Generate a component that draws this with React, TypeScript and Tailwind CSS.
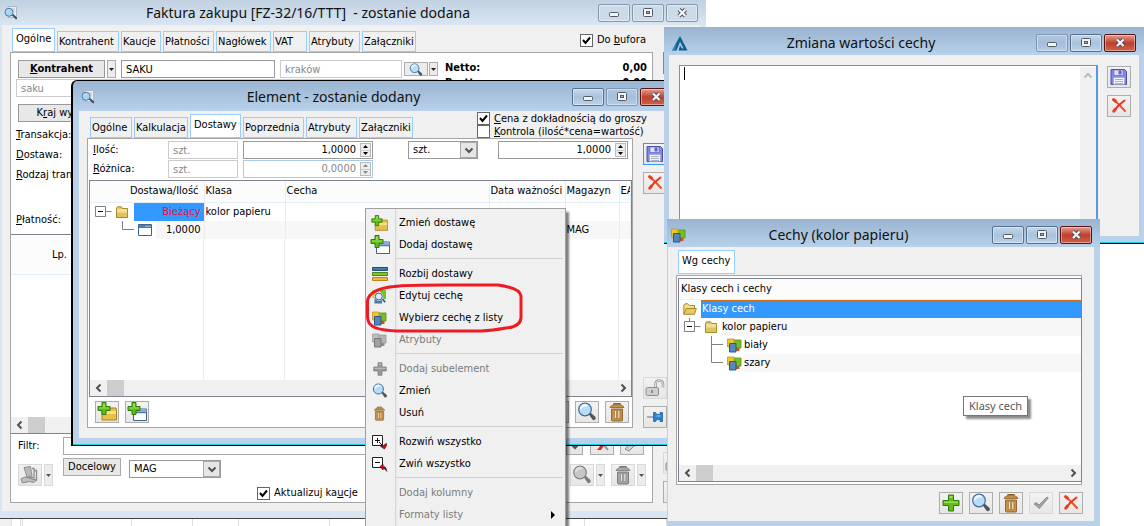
import React, { useState } from "react";
import type { ReactNode } from "react";

/* ---------- icons ---------- */

type IconProps = { gray?: boolean; className?: string };

function Magnifier({ gray, className = "h-5 w-5" }: IconProps) {
  return (
    <svg viewBox="0 0 20 20" className={className} aria-hidden="true">
      <path d="M11.5 12l2-1.5 5 4.500q1 2-1.200 3.200l-1.500-.2z" fill={gray ? "#7d7d7d" : "#4d5560"} />
      <circle cx="8" cy="7.500" r="6.300" fill={gray ? "#c6c6c6" : "#b9ddf7"} stroke={gray ? "#848484" : "#3c6a9c"} strokeWidth="1.200" />
      <path d="M3.500 8A4.500 4.500 0 0 1 11.500 4Q6 4 3.500 8z" fill={gray ? "#dedede" : "#edf8ff"} />
    </svg>
  );
}

function PageMagnifier() {
  return (
    <svg viewBox="0 0 15 15" className="h-[15px] w-[15px]" aria-hidden="true">
      <path d="M4 .5h8.500v11H4z" fill="#e9ecef" stroke="#b5b9bf" />
      <path d="M6 3h5M6 5h5" stroke="#b8c0cb" />
      <path d="M7.500 9l1.500-1.200 4 3.700q.5 1.500-1 2z" fill="#3f4d5c" />
      <circle cx="5" cy="6.300" r="4" fill="#a9d5f3" stroke="#467fb5" />
      <path d="M2.500 6q1-2.500 3.500-2.400Q3.600 4.200 2.500 6z" fill="#f2faff" />
    </svg>
  );
}

function Trash({ gray, className = "h-5 w-5" }: IconProps) {
  const line = gray ? "#777777" : "#8d5f28";
  return (
    <svg viewBox="0 0 20 20" className={className} aria-hidden="true">
      <path d="M7 3V1.500h6V3" fill="none" stroke={line} strokeWidth="1.200" />
      <path d="M3 5.500q1-3 7-3t7 3z" fill={gray ? "#ababab" : "#c39247"} stroke={line} strokeWidth=".8" />
      <path d="M4.500 7h11v11q0 1-1 1h-9q-1 0-1-1z" fill={gray ? "#a4a4a4" : "#c58f45"} stroke={line} strokeWidth=".9" />
      <path d="M7.500 8.500h2v8h-2zM10.800 8.500h2v8h-2z" fill={gray ? "#e3e3e3" : "#f6e6c4"} stroke={line} strokeWidth=".5" />
    </svg>
  );
}

function Floppy() {
  return (
    <svg viewBox="0 0 18 18" className="h-[18px] w-[18px]" aria-hidden="true">
      <path d="M1 1.500h13.500l2 2v13H1z" fill="#8389e4" stroke="#4b50a8" />
      <path d="M4 2h9v5.500H4z" fill="#dfe1fb" stroke="#5a5fb5" strokeWidth=".6" />
      <path d="M8.500 2.500h3v4h-3z" fill="#5d62c4" />
      <path d="M3.500 9.500h11v7h-11z" fill="#f3f5f8" stroke="#9197c6" strokeWidth=".5" />
      <path d="M5 11.500h8M5 13.500h8M5 15.500h8" stroke="#a8b0c0" />
    </svg>
  );
}

function RedX() {
  return (
    <svg viewBox="0 0 16 16" className="h-4 w-4" aria-hidden="true">
      <path d="M3 2q5 4 11 11" fill="none" stroke="#f2512b" strokeWidth="2" strokeLinecap="round" />
      <path d="M13.500 2.500Q7 7 3 13" fill="none" stroke="#ea3219" strokeWidth="2" strokeLinecap="round" />
      <path d="M2.600 1.700l2 1.500M2.800 13.200l1.500-2" fill="none" stroke="#f03b20" strokeWidth="3" strokeLinecap="round" />
    </svg>
  );
}

function Plus({ gray, className = "h-[18px] w-[18px]" }: IconProps) {
  return (
    <svg viewBox="0 0 18 18" className={className} aria-hidden="true">
      <path d="M6.500 1h5v5.500H17v5h-5.500V17h-5v-5.500H1v-5h5.500z" fill={gray ? "#9a9a9a" : "#5fbc1c"} stroke={gray ? "#777" : "#33780c"} />
      <path d="M7.500 2h3v2h-3zM2 7.500h14v1.500H2z" fill={gray ? "#b9b9b9" : "#97e24c"} />
    </svg>
  );
}

function FolderPlus({ className = "h-5 w-5" }: IconProps) {
  return (
    <svg viewBox="0 0 20 20" className={className} aria-hidden="true">
      <path d="M11.500 7.500l1-1.500H19l.5 1.500v10.500H5V9z" fill="#e5c04b" stroke="#a68524" />
      <path d="M5.500 12h13.500v-3H8z" fill="#f5df8d" />
      <path d="M5 .5h4V4.500h4v4H9v4H5v-4H1v-4h4z" fill="#60bd1d" stroke="#327a0b" />
      <path d="M6 1.500h2V5H6zM2 5.500h10v1H2z" fill="#95e148" />
    </svg>
  );
}

function WindowPlus({ className = "h-5 w-5" }: IconProps) {
  return (
    <svg viewBox="0 0 20 20" className={className} aria-hidden="true">
      <path d="M6.500 7h13v11.500h-13z" fill="#fafcff" stroke="#42648c" />
      <path d="M7 7.500h12.500v3H7z" fill="#84aede" />
      <path d="M7 10.700h12.500" stroke="#42648c" />
      <path d="M5 .5h4V4.500h4v4H9v4H5v-4H1v-4h4z" fill="#60bd1d" stroke="#327a0b" />
      <path d="M6 1.500h2V5H6zM2 5.500h10v1H2z" fill="#95e148" />
    </svg>
  );
}

function Bars() {
  return (
    <svg viewBox="0 0 16 16" className="h-4 w-4" aria-hidden="true">
      <path d="M.5 1.500h15v3H.5z" fill="#4679ae" stroke="#274e78" />
      <path d="M.5 6.500h15v3H.5z" fill="#83c52c" stroke="#4a8417" />
      <path d="M.5 11.500h15v3H.5z" fill="#f2b83e" stroke="#bd8417" />
    </svg>
  );
}

function Cubes({ gray, className = "h-[15px] w-[15px]" }: IconProps) {
  return (
    <svg viewBox="0 0 15 15" className={className} aria-hidden="true">
      <path d="M8.500 9h4v4h-4z" fill={gray ? "#8c8c8c" : "#e0481c"} />
      <path d="M6.500 2h7.500v8H6.500z" fill={gray ? "#b4b4b4" : "#78be20"} stroke={gray ? "#999" : "#559312"} strokeWidth=".8" />
      <path d="M.5 1H7v8H.5z" fill={gray ? "#bebebe" : "#f0c62c"} stroke={gray ? "#9d9d9d" : "#c89216"} strokeWidth=".8" />
      <path d="M2.500 5.500H9v8.500H2.500z" fill={gray ? "#a2a2a2" : "#5487bb"} stroke={gray ? "#777" : "#2c5688"} />
    </svg>
  );
}

function CubesMagnifier() {
  return (
    <svg viewBox="0 0 15 15" className="h-[15px] w-[15px]" aria-hidden="true">
      <path d="M8 1h6v9H8z" fill="#79bf22" />
      <path d="M.5 1h7v8h-7z" fill="#f0c22b" />
      <path d="M2.500 8H10v6.500H2.500z" fill="#4679ad" />
      <path d="M9 10l1.500-1.500 3.500 3.800-1.500 2z" fill="#2b5f9c" stroke="#eef3fa" strokeWidth=".6" />
      <circle cx="6.800" cy="7.500" r="4.400" fill="#fff" />
      <circle cx="6.800" cy="7.500" r="3.500" fill="#dceefb" stroke="#375c8c" strokeWidth="1" />
    </svg>
  );
}

function TreeToggleIcon({ sign }: { sign: "plus" | "minus" }) {
  return (
    <svg viewBox="0 0 16 16" className="h-4 w-4" aria-hidden="true">
      <path d="M.5 1.500h10v10H.5z" fill="#fff" stroke="#222" />
      <path d={sign === "plus" ? "M3 6.500h5M5.500 4v5" : "M3 6.500h5"} stroke="#111" />
      {sign === "plus" ? (
        <g>
          <path d="M7 8l4 4" stroke="#111" />
          <path d="M14.500 9.500v2l-2 3.500-4-2.500h2l2-2z" fill="#e00" stroke="#111" strokeWidth=".6" />
        </g>
      ) : (
        <g>
          <path d="M12 12l3 3.500" stroke="#111" />
          <path d="M8 10.500L11 8v2q3 .5 3.500 4-2-2-3.500-1.500v1.500z" fill="#e00" stroke="#111" strokeWidth=".6" />
        </g>
      )}
    </svg>
  );
}

function Folder() {
  return (
    <svg viewBox="0 0 14 12" className="h-3 w-[14px] shrink-0" aria-hidden="true">
      <path d="M1.500 2.500L2.500.8h4l1 1.700h5v9h-11z" fill="#e0c55c" stroke="#a88a2c" />
      <path d="M2 3h10v3.500H2z" fill="#f1df96" />
    </svg>
  );
}

function OpenFolder() {
  return (
    <svg viewBox="0 0 14 12" className="h-3 w-[14px] shrink-0" aria-hidden="true">
      <path d="M.8 11V2L2 .8h3L6.500 2.500h5v3" fill="#f3e096" stroke="#a88a2c" />
      <path d="M.8 11.300L3.300 5.500h10L11.500 11.300z" fill="#e7c95d" stroke="#a88a2c" />
    </svg>
  );
}

function MiniWindow() {
  return (
    <svg viewBox="0 0 14 12" className="h-3 w-[14px] shrink-0" aria-hidden="true">
      <path d="M.5.5h13v11H.5z" fill="#fbfdff" stroke="#3c648f" />
      <path d="M1 1h12v3H1z" fill="#4d7fb4" />
      <path d="M7.500 2.200h1M9.500 2.200h1M11.500 2.200h1" stroke="#fff" />
    </svg>
  );
}

function Padlock() {
  return (
    <svg viewBox="0 0 20 18" className="h-[18px] w-5" aria-hidden="true">
      <path d="M10.500 9V5q0-3.500 3.700-3.500T18 5v3.500" fill="none" stroke="#9e9e9e" strokeWidth="2.600" />
      <path d="M10.500 9V5q0-3.500 3.700-3.500T18 5v3.500" fill="none" stroke="#e4e4e4" strokeWidth="1" />
      <rect x="1" y="8.500" width="12.500" height="8" rx="1.500" fill="#cfcfcf" stroke="#8e8e8e" />
      <path d="M7 11v3" stroke="#777" strokeWidth="1.500" />
    </svg>
  );
}

function Pin() {
  return (
    <svg viewBox="0 0 16 14" className="h-[14px] w-4" aria-hidden="true">
      <path d="M0 7h7" stroke="#8e979f" strokeWidth="1.500" />
      <path d="M6.500 2.500h2l1.500 2h3V2.500h2.500v9H13v-2h-3l-1.500 2h-2z" fill="#2d80cf" stroke="#16579b" strokeWidth=".7" />
      <path d="M9.500 5.500h4v1h-4z" fill="#9cccf5" />
    </svg>
  );
}

function Logo() {
  return (
    <svg viewBox="0 0 16 15" className="h-[15px] w-4" aria-hidden="true">
      <path d="M8 0l7.500 14.500h-9L8 9.500l2 3h1.500L8 5.500 4.500 14.500H0z" fill="#0a5f93" />
      <path d="M7.500 1L4.500 7.300 3 14.500H.3z" fill="#2d8dbb" />
    </svg>
  );
}

function GrayCheck() {
  return (
    <svg viewBox="0 0 16 14" className="h-[14px] w-4" aria-hidden="true">
      <path d="M1 8l2-1.500 3 2.500 8-8 1.300 1L6.500 12.500z" fill="#a3a3a3" stroke="#777" strokeWidth=".7" />
    </svg>
  );
}

function GrayDocs() {
  return (
    <svg viewBox="0 0 20 18" className="h-[18px] w-5" aria-hidden="true">
      <path d="M4 1.500l6.500-1 1.500 9.500-5 1z" fill="#b9b9b9" stroke="#8f8f8f" />
      <path d="M12 2.500h2v9H9M14.500 4.500h2v9h-5" fill="none" stroke="#8d8d8d" strokeWidth="1.300" />
      <path d="M1 13q3-3 7-1.500l5 2 4 .5-3.500 2.500-4-1-7 1.500z" fill="#bdbdbd" stroke="#8a8a8a" />
    </svg>
  );
}

function RedBrush() {
  return (
    <svg viewBox="0 0 18 16" className="h-4 w-[18px]" aria-hidden="true">
      <path d="M4 14L12 4l2 1-6 9z" fill="#df2323" />
      <path d="M10 8l5 6" stroke="#999" strokeWidth="2" />
    </svg>
  );
}

function GrayWrench() {
  return (
    <svg viewBox="0 0 18 16" className="h-4 w-[18px]" aria-hidden="true">
      <path d="M2 13q3-4 6-4.500Q6 4 12 2L10.500 5l2.500 2 3-2q0 5-5 5L6 15z" fill="#cfcfcf" stroke="#8a8a8a" />
    </svg>
  );
}

function Chevron({ dir }: { dir: "left" | "right" | "up" | "down" }) {
  const d = {
    left: "M6.500 1.500L3 5l3.500 3.500",
    right: "M3.500 1.500L7 5l-3.500 3.500",
    up: "M1.500 6.500L5 3l3.500 3.500",
    down: "M1.500 3.500L5 7l3.500-3.500",
  }[dir];
  return (
    <svg viewBox="0 0 10 10" className="h-[10px] w-[10px]" aria-hidden="true">
      <path d={d} fill="none" stroke="currentColor" strokeWidth="2" />
    </svg>
  );
}

/* ---------- shared controls ---------- */

function CaptionButton({ kind, tone }: { kind: "min" | "max" | "close"; tone: "dim" | "blue" | "soft" | "red" }) {
  const look = {
    dim: "border-[#8697b0] bg-[#cddbe9]",
    soft: "border-[#7f97b5] bg-linear-to-b from-[#b0c6de] via-[#a5bfdb] via-50% to-[#b3cce6]",
    blue: "border-[#56708f] bg-linear-to-b from-[#c6d8ea] via-[#a9c2dc] via-50% to-[#bbd3ea]",
    red: "border-[#561616] bg-linear-to-b from-[#e69c91] via-[#bf3f2a] via-50% to-[#d0614a]",
  }[tone];
  const label = { min: "Minimalizuj", max: "Maksymalizuj", close: "Zamknij" }[kind];
  return (
    <button type="button" aria-label={label} className={`grid h-[18px] w-8 place-items-center rounded-[2px] border shadow-[inset_0_0_0_1px_rgba(255,255,255,0.4)] ${look}`}>
      <svg viewBox="0 0 14 12" className="h-3 w-[14px]" aria-hidden="true">
        {kind === "min" && <rect x="2.500" y="5.500" width="9" height="4" rx="1" fill="#f4f4f4" stroke="#525a66" />}
        {kind === "max" && (
          <g fill="#f4f4f4" stroke="#525a66">
            <rect x="2.500" y="1.500" width="9" height="8" rx="1" />
            <rect x="5.500" y="4.500" width="3" height="2" fill="#9fb5cc" />
          </g>
        )}
        {kind === "close" && (
          <g>
            <path d="M4 2.500l6.500 6.500M10.500 2.500L4 9" stroke="#4d5360" strokeWidth="4.200" />
            <path d="M4 2.500l6.500 6.500M10.500 2.500L4 9" stroke="#f6f6f6" strokeWidth="2.200" />
          </g>
        )}
      </svg>
    </button>
  );
}

type TitleBarProps = { icon: ReactNode; title: string; dim?: boolean; dimMax?: boolean; dimMin?: boolean };

function TitleBar({ icon, title, dim, dimMax, dimMin }: TitleBarProps) {
  return (
    <header className="flex h-7 shrink-0 items-center gap-1 pr-2 pl-1">
      <span className="w-6">{icon}</span>
      <h1 className="min-w-0 flex-1 truncate pr-[10px] text-center font-['Noto_Sans',sans-serif] text-[14px] leading-6 whitespace-pre text-[#111]">{title}</h1>
      <div className="flex gap-[2px]">
        <CaptionButton kind="min" tone={dim ? "dim" : dimMin ? "soft" : "blue"} />
        <CaptionButton kind="max" tone={dim ? "dim" : dimMax ? "soft" : "blue"} />
        <CaptionButton kind="close" tone={dim ? "dim" : "red"} />
      </div>
    </header>
  );
}

function Tab({ active, width, children }: { active?: boolean; width: string; children: ReactNode }) {
  return (
    <button
      type="button"
      role="tab"
      aria-selected={!!active}
      className={`border border-[#99ccff] text-left whitespace-nowrap ${width} ${active ? "h-6 bg-white pb-[3px] pl-[3px]" : "h-[21px] bg-[#f0f0f0] pl-px"}`}
    >
      {children}
    </button>
  );
}

function ToolButton({ label, children, state = "normal" }: { label: string; children: ReactNode; state?: "normal" | "off" | "focus" }) {
  const look = { normal: "border-[#adadad]", off: "border-[#d9d9d9]", focus: "border-[#3399ff]" }[state];
  return (
    <button type="button" aria-label={label} disabled={state === "off"} className={`grid h-[22px] w-6 shrink-0 place-items-center border bg-linear-to-b from-[#f2f2f2] to-[#e6e6e6] ${look}`}>
      {children}
    </button>
  );
}

function ArrowButton({ label, off, height = "h-[22px]" }: { label: string; off?: boolean; height?: string }) {
  return (
    <button type="button" aria-label={label} className={`grid w-[9px] shrink-0 place-items-center border bg-[#ececec] ${height} ${off ? "border-[#d9d9d9] text-[#555]" : "border-[#adadad] text-[#222]"}`}>
      <svg viewBox="0 0 5 3" className="h-[3px] w-[5px]" aria-hidden="true"><path d="M0 0h5L2.500 3z" fill="currentColor" /></svg>
    </button>
  );
}

function TextField({ label, value, look }: { label: string; value: string; look: string }) {
  return <input aria-label={label} defaultValue={value} className={`h-[18px] min-w-0 border bg-white px-1 outline-none ${look}`} />;
}

function SpinField({ id, value, width, off }: { id: string; value: string; width: string; off?: boolean }) {
  return (
    <span className={`flex h-[18px] border bg-white p-px ${width} ${off ? "border-[#a9c8ea] text-[#888]" : "border-[#999]"}`}>
      <input id={id} aria-label={id} defaultValue={value} className="min-w-0 flex-1 bg-transparent pr-1 text-right outline-none" />
      <span className={`flex w-[11px] flex-col justify-between border border-[#bbb] bg-[#eee] ${off ? "text-[#888]" : "text-black"}`}>
        <button type="button" aria-label="Więcej" className="grid flex-1 place-items-center">
          <svg viewBox="0 0 5 3" className="h-[3px] w-[5px]" aria-hidden="true"><path d="M0 3h5L2.500 0z" fill="currentColor" /></svg>
        </button>
        <button type="button" aria-label="Mniej" className="grid flex-1 place-items-center border-t border-[#ccc]">
          <svg viewBox="0 0 5 3" className="h-[3px] w-[5px]" aria-hidden="true"><path d="M0 0h5L2.500 3z" fill="currentColor" /></svg>
        </button>
      </span>
    </span>
  );
}

function Combo({ label, value, width }: { label: string; value: string; width: string }) {
  return (
    <span className={`grid h-[18px] grid-cols-[1fr_17px] border border-[#999] bg-white ${width}`}>
      <select aria-label={label} className="col-span-2 col-start-1 row-start-1 appearance-none bg-transparent px-1 leading-4 outline-none">
        <option>{value}</option>
      </select>
      <span className="pointer-events-none col-start-2 row-start-1 grid place-items-center border border-[#aaa] bg-[#e6e6e6] text-[#505050]">
        <Chevron dir="down" />
      </span>
    </span>
  );
}

function CheckBox({ checked, children, tight }: { checked?: boolean; children: ReactNode; tight?: boolean }) {
  return (
    <label className={`flex items-center gap-1 whitespace-nowrap ${tight ? "h-[13px] leading-[13px]" : "h-[14px]"}`}>
      <span className="grid h-[13px] w-[13px] shrink-0">
        <input type="checkbox" defaultChecked={checked} className="peer col-start-1 row-start-1 h-[13px] w-[13px] appearance-none border border-[#666] bg-white" />
        <svg viewBox="0 0 13 13" className="pointer-events-none invisible col-start-1 row-start-1 peer-checked:visible" aria-hidden="true">
          <path d="M3 6l2.500 3L10 3.500" fill="none" stroke="#000" strokeWidth="2" />
        </svg>
      </span>
      <span>{children}</span>
    </label>
  );
}

function ScrollBar() {
  return (
    <div className="flex h-4 shrink-0 items-center bg-[#f0f0f0] text-[#505050]">
      <button type="button" aria-label="Przewiń w lewo" className="grid h-full w-[17px] place-items-center"><Chevron dir="left" /></button>
      <span className="h-full w-[17px] bg-[#cdcdcd]" />
      <button type="button" aria-label="Przewiń w prawo" className="ml-auto grid h-full w-[17px] place-items-center"><Chevron dir="right" /></button>
    </div>
  );
}

/* ---------- windows ---------- */

function InvoiceWindow() {
  return (
    <section className="absolute top-0 left-0 flex h-[519px] w-[706px] flex-col border-b border-[#444] bg-[#d9e5f2] bg-linear-to-b from-[#c1d1e1] to-[#d9e5f2] to-[25px]">
      <div className="-mt-px h-[26px]">
        <TitleBar icon={<PageMagnifier />} title="Faktura zakupu [FZ-32/16/TTT]  - zostanie dodana" dim />
      </div>
      <div className="mr-[6px] mb-[7px] ml-[2px] flex min-h-0 flex-1 flex-col bg-[#f0f0f0] pb-2 pl-2">
        <div className="flex h-[27px] shrink-0 items-end pl-[2px]">
          <div role="tablist" className="flex items-end gap-[2px]">
            <Tab active width="w-[43px]">Ogólne</Tab>
            <Tab width="w-[62px]">Kontrahent</Tab>
            <Tab width="w-10">Kaucje</Tab>
            <Tab width="w-[51px]">Płatności</Tab>
            <Tab width="w-[55px]">Nagłówek</Tab>
            <Tab width="w-[34px]">VAT</Tab>
            <Tab width="w-[51px]">Atrybuty</Tab>
            <Tab width="w-[54px]">Załączniki</Tab>
          </div>
          <div className="mr-[54px] ml-auto pb-[5px]"><CheckBox checked>Do <u>b</u>ufora</CheckBox></div>
        </div>
        <div className="flex min-h-0 flex-1 gap-[10px]">
          <div className="flex w-[643px] flex-col border border-[#a5a5a5] bg-white">
            <div className="h-[181px] shrink-0 pt-[7px] pr-[5px] pl-[5px]">
              <div className="flex items-start">
                <div className="flex w-[422px] shrink-0 flex-col gap-px">
                  <div className="flex h-[18px] items-center pl-[2px]">
                    <button type="button" className="h-[18px] w-[87px] border border-[#999] bg-[#e8e8e8] font-bold"><u>K</u>ontrahent</button>
                    <span className="ml-[2px] flex"><ArrowButton label="Wybierz kontrahenta" height="h-[18px]" /></span>
                    <span className="ml-[5px] flex w-[154px]"><TextField label="Kod" value="SAKU" look="flex-1 border-[#999]" /></span>
                    <span className="ml-[5px] flex w-[122px]"><TextField label="Miasto" value="kraków" look="flex-1 border-[#ccc] text-[#888]" /></span>
                    <span className="ml-[2px] flex items-center gap-px">
                      <button type="button" aria-label="Szukaj" className="grid h-[14px] w-6 place-items-center border border-[#adadad] bg-[#ececec]"><Magnifier className="h-[14px] w-[14px]" /></button>
                      <ArrowButton label="Opcje wyszukiwania" height="h-[14px]" />
                    </span>
                  </div>
                  <TextField label="Nazwa" value="saku" look="border-[#ccc] text-[#888]" />
                </div>
                <dl className="grid flex-1 grid-cols-[1fr_auto] pl-[7px] leading-[15px] font-bold">
                  <dt>Netto:</dt><dd>0,00</dd>
                  <dt>Brutto:</dt><dd>0,00</dd>
                </dl>
              </div>
              <button type="button" className="mt-[7px] ml-[2px] h-[18px] w-24 border border-[#999] bg-[#e8e8e8]">K<u>r</u>aj wysyłki</button>
              <div className="mt-[3px] flex flex-col leading-5">
                <span><u>T</u>ransakcja:</span>
                <span><u>D</u>ostawa:</span>
                <span><u>R</u>odzaj transakcji:</span>
              </div>
              <p className="mt-[25px] leading-5"><u>P</u>łatność:</p>
            </div>
            <div className="flex h-[200px] shrink-0 flex-col border border-l-0 border-[#7f8290]">
              <div className="h-10 border-b border-[#e4edf8] bg-[#fcfcfc] pt-[13px] pl-[41px]">Lp.</div>
              <div className="flex-1" />
              <ScrollBar />
            </div>
            <div className="flex flex-1 flex-col pt-[3px] pl-[7px]">
              <div className="flex items-center">
                <label htmlFor="filtr" className="w-[45px]">Filtr:</label>
                <input id="filtr" className="h-[18px] w-[503px] border border-[#aaa] bg-white" />
                <span className="grid h-[18px] w-[17px] place-items-center border border-[#aaa] bg-[#e6e6e6] text-[#505050]"><Chevron dir="down" /></span>
                <span className="flex h-[18px] items-end gap-[6px] overflow-hidden pl-[7px]">
                  <ToolButton label="Wyczyść filtr"><RedBrush /></ToolButton>
                  <ToolButton label="Konstruktor filtra"><GrayWrench /></ToolButton>
                </span>
              </div>
              <div className="mt-[3px] flex items-start">
                <span className="mt-[6px] flex w-[45px] gap-[2px]">
                  <ToolButton label="Dokumenty" state="off"><GrayDocs /></ToolButton>
                  <ArrowButton label="Więcej dokumentów" off />
                </span>
                <button type="button" className="h-[18px] w-[58px] border border-[#aaa] bg-[#e8e8e8]">Docelowy</button>
                <span className="mt-[2px] ml-2 flex"><Combo label="Magazyn" value="MAG" width="w-[92px]" /></span>
                <span className="mt-7 ml-9 h-0"><CheckBox checked>Aktualizuj ka<u>u</u>cje</CheckBox></span>
                <span className="mt-[6px] mr-[6px] ml-auto flex gap-[2px]">
                  <ToolButton label="Podgląd" state="off"><Magnifier gray /></ToolButton>
                  <ArrowButton label="Opcje podglądu" off />
                  <span className="w-[2px]" />
                  <ToolButton label="Usuń pozycję" state="off"><Trash gray /></ToolButton>
                  <ArrowButton label="Opcje usuwania" off />
                </span>
              </div>
            </div>
          </div>
          <div className="flex flex-col gap-[7px]">
            <ToolButton label="Zapisz fakturę" state="focus"><Floppy /></ToolButton>
            <span className="flex-1" />
            <ToolButton label="Blokada" state="off"><Padlock /></ToolButton>
            <ToolButton label="Przypnij"><Pin /></ToolButton>
          </div>
        </div>
      </div>
    </section>
  );
}

function ElementWindow() {
  return (
    <section className="absolute top-20 left-[71px] flex h-[366px] w-[611px] flex-col rounded-t-md border-2 border-t border-b border-black border-r-[#b9d1ea] bg-[#b9d1ea] bg-linear-to-b from-[#99b4d1] to-[#b9d1ea] to-[30px]">
      <div className="h-[30px] shrink-0 pt-[2px] pl-1">
        <TitleBar icon={<PageMagnifier />} title="Element - zostanie dodany" dimMax />
      </div>
      <div className="mx-[6px] mb-[6px] flex min-h-0 flex-1 flex-col bg-[#f0f0f0] pb-[10px] pl-2">
        <div className="flex h-[27px] shrink-0 items-end pl-[3px]">
          <div role="tablist" className="flex items-end gap-[2px]">
            <Tab width="w-[42px]">Ogólne</Tab>
            <Tab width="w-[54px]">Kalkulacja</Tab>
            <Tab active width="w-[51px]">Dostawy</Tab>
            <Tab width="w-[61px]">Poprzednia</Tab>
            <Tab width="w-[51px]">Atrybuty</Tab>
            <Tab width="w-[54px]">Załączniki</Tab>
          </div>
          <div className="ml-16 flex flex-col">
            <CheckBox tight checked><u>C</u>ena z dokładnością do groszy</CheckBox>
            <CheckBox tight><u>K</u>ontrola (ilość*cena=wartość)</CheckBox>
          </div>
        </div>
        <div className="flex min-h-0 flex-1 gap-[10px]">
          <div className="flex w-[546px] flex-col border border-[#a5a5a5] bg-white">
            <div className="flex flex-col gap-px py-[2px] pl-[5px]">
              <div className="flex items-center">
                <label htmlFor="Ilość" className="w-[75px] shrink-0"><u>I</u>lość:</label>
                <span className="flex w-[70px]"><TextField label="Jednostka" value="szt." look="flex-1 border-[#ccc] text-[#888]" /></span>
                <span className="ml-[5px]"><SpinField id="Ilość" value="1,0000" width="w-[130px]" /></span>
                <span className="ml-[35px]"><Combo label="Jednostka ceny" value="szt." width="w-[70px]" /></span>
                <span className="ml-5"><SpinField id="Cena" value="1,0000" width="w-[130px]" /></span>
              </div>
              <div className="flex items-center">
                <label htmlFor="Różnica" className="w-[75px] shrink-0"><u>R</u>óżnica:</label>
                <span className="flex w-[70px]"><TextField label="Jednostka różnicy" value="szt." look="flex-1 border-[#ccc] text-[#888]" /></span>
                <span className="ml-[5px]"><SpinField id="Różnica" value="0,0000" width="w-[130px]" off /></span>
              </div>
            </div>
            <div className="ml-px flex h-[217px] shrink-0 flex-col overflow-hidden border border-[#7f8290]">
              <table className="w-full table-fixed border-collapse">
                <colgroup>
                  <col className="w-[114px]" /><col className="w-[81px]" /><col className="w-[204px]" /><col className="w-[76px]" /><col className="w-[54px]" /><col />
                </colgroup>
                <thead>
                  <tr className="h-[21px] border-b border-[#e4edf8] bg-[#fcfcfc] [&>th]:overflow-hidden [&>th]:border-r [&>th]:border-[#e4edf8] [&>th]:px-px [&>th]:text-left [&>th]:font-normal [&>th]:whitespace-nowrap">
                    <th><span className="flex justify-end pr-1">Dostawa/Ilość</span></th>
                    <th>Klasa</th><th>Cecha</th><th>Data ważności</th><th>Magazyn</th><th>EAN</th>
                  </tr>
                </thead>
                <tbody className="[&_td]:h-[18px] [&_td]:border-r [&_td]:border-[#ececec] [&_td]:p-0 [&_td]:whitespace-nowrap">
                  <tr>
                    <td>
                      <div className="flex h-[18px] items-center">
                        <svg viewBox="0 0 20 18" className="ml-[5px] h-[18px] w-5 shrink-0" aria-hidden="true">
                          <path d="M.5 3.500h10v10H.5zM10.500 8.500h6" fill="none" stroke="#808080" />
                          <path d="M3 8.500h5" stroke="#000" />
                        </svg>
                        <Folder />
                        <span className="ml-[5px] flex-1 bg-[#3399ff] pr-[3px] text-right leading-[18px] text-[#f0102e]">Bieżący</span>
                      </div>
                    </td>
                    <td className="pl-px!">kolor papieru</td><td /><td /><td /><td />
                  </tr>
                  <tr>
                    <td>
                      <div className="flex h-[18px] items-center">
                        <svg viewBox="0 0 12 18" className="ml-8 h-[18px] w-3 shrink-0" aria-hidden="true">
                          <path d="M.5 0v8.500H12" fill="none" stroke="#808080" />
                        </svg>
                        <span className="ml-1 flex"><MiniWindow /></span>
                        <span className="ml-1 flex-1 bg-[#f7f7f7] pr-[3px] text-right leading-[18px]">1,0000</span>
                      </div>
                    </td>
                    <td className="bg-[#f7f7f7]" /><td className="bg-[#f7f7f7]" /><td className="bg-[#f7f7f7]" /><td className="bg-[#f7f7f7] pl-px!">MAG</td><td className="bg-[#f7f7f7]" />
                  </tr>
                </tbody>
              </table>
              <div className="grid flex-1 grid-cols-[114px_81px_204px_76px_54px_1fr] [&>span]:border-r [&>span]:border-[#ececec]">
                <span /><span /><span /><span /><span />
              </div>
              <ScrollBar />
            </div>
            <div className="flex gap-[6px] pt-1 pr-[3px] pl-[7px]">
              <ToolButton label="Dodaj dostawę z folderu"><FolderPlus /></ToolButton>
              <ToolButton label="Dodaj nową dostawę"><WindowPlus /></ToolButton>
              <span className="flex-1" />
              <ToolButton label="Dodaj"><Plus /></ToolButton>
              <ToolButton label="Zmień element"><Magnifier /></ToolButton>
              <ToolButton label="Usuń element"><Trash /></ToolButton>
            </div>
          </div>
          <div className="flex flex-col gap-[7px] pt-[5px]">
            <ToolButton label="Zapisz element" state="focus"><Floppy /></ToolButton>
            <ToolButton label="Anuluj element"><RedX /></ToolButton>
            <span className="flex-1" />
            <ToolButton label="Blokada elementu" state="off"><Padlock /></ToolButton>
            <ToolButton label="Przypnij element"><Pin /></ToolButton>
          </div>
        </div>
      </div>
      <div className="h-px bg-[#10cfe6]" />
    </section>
  );
}

function ValueWindow() {
  return (
    <section className="absolute top-[27px] left-[664px] flex h-[217px] w-[480px] flex-col border-b border-black bg-[#b9d1ea] bg-linear-to-b from-[#99b4d1] to-[#b9d1ea] to-[28px]">
      <div className="h-7 shrink-0 pt-[2px] pl-1">
        <TitleBar icon={<Logo />} title="Zmiana wartości cechy" dimMin />
      </div>
      <div className="mx-[5px] mb-[6px] flex min-h-0 flex-1 gap-[9px] bg-[#f0f0f0] pt-[10px] pr-2 pl-[10px]">
        <div className="flex flex-1 border border-r-2 border-b-0 border-[#5599dd] bg-white">
          <textarea aria-label="Wartość cechy" className="flex-1 resize-none border-0 bg-transparent px-1 py-[2px] outline-none" />
          <span className="absolute top-10 left-[20px] h-[13px] w-px bg-black" />
          <div className="mt-px flex w-4 flex-col justify-between bg-[#f0f0f0] pt-1 pb-[10px] text-[#bbb]">
            <span className="grid place-items-center"><Chevron dir="up" /></span>
            <span className="grid place-items-center"><Chevron dir="down" /></span>
          </div>
        </div>
        <div className="flex flex-col gap-[7px] pt-px">
          <ToolButton label="Zapisz wartość"><Floppy /></ToolButton>
          <ToolButton label="Anuluj zmianę"><RedX /></ToolButton>
        </div>
      </div>
      <div className="h-px bg-[#10cfe6]" />
    </section>
  );
}

function FeaturesWindow() {
  return (
    <section className="absolute top-[219px] left-[667px] flex h-[320px] w-[433px] flex-col bg-[#b9d1ea] bg-linear-to-b from-[#99b4d1] to-[#b9d1ea] to-[28px]">
      <div className="h-7 shrink-0 pt-[2px]">
        <TitleBar icon={<Cubes />} title="Cechy (kolor papieru)" />
      </div>
      <div className="mr-[6px] mb-[18px] ml-px flex min-h-0 flex-1 flex-col bg-[#f0f0f0] pr-[11px] pb-[7px] pl-2">
        <div role="tablist" className="flex h-[27px] shrink-0 items-end pl-[2px]"><Tab active width="w-[57px]">Wg cechy</Tab></div>
        <div className="mt-px mr-px flex min-h-0 flex-1 flex-col border border-[#a5a5a5] bg-white py-[2px] pl-px">
          <div className="-mr-px flex min-h-0 flex-1 flex-col border border-[#7f8290]">
            <div className="h-[21px] border-b border-[#eaeef8] bg-[#fcfcfc] pt-[3px] pl-[2px]">Klasy cech i cechy</div>
            <ul role="tree" className="flex flex-1 flex-col leading-[18px]">
              <li role="treeitem" className="flex h-[18px] items-center">
                <span className="ml-1 flex w-[18px]"><OpenFolder /></span>
                <span className="h-[18px] flex-1 border border-dotted border-[#d06f10] bg-[#3399ff] leading-4 text-white">Klasy cech</span>
              </li>
              <li role="treeitem" className="flex h-[18px] items-center">
                <svg viewBox="0 0 20 18" className="ml-[5px] h-[18px] w-5 shrink-0" aria-hidden="true">
                  <path d="M5.500 0v4M.5 3.500h10v10H.5zM10.500 8.500h6" fill="none" stroke="#808080" />
                  <path d="M3 8.500h5" stroke="#000" />
                </svg>
                <Folder />
                <span className="ml-[4px] flex-1 bg-[#f7f7f7]">kolor papieru</span>
              </li>
              <li role="treeitem" className="flex h-[18px] items-center">
                <svg viewBox="0 0 12 18" className="ml-8 h-[18px] w-3 shrink-0" aria-hidden="true"><path d="M.5 0v18M.5 8.500H12" fill="none" stroke="#808080" /></svg>
                <span className="ml-1"><Cubes /></span>
                <span className="ml-[2px] flex-1">biały</span>
              </li>
              <li role="treeitem" className="flex h-[18px] items-center">
                <svg viewBox="0 0 12 18" className="ml-8 h-[18px] w-3 shrink-0" aria-hidden="true"><path d="M.5 0v8.500H12" fill="none" stroke="#808080" /></svg>
                <span className="ml-1"><Cubes /></span>
                <span className="ml-[2px] flex-1 bg-[#f7f7f7]">szary</span>
              </li>
            </ul>
            <ScrollBar />
          </div>
        </div>
        <div className="mt-[7px] flex shrink-0 justify-end gap-[6px]">
          <ToolButton label="Dodaj cechę"><Plus /></ToolButton>
          <ToolButton label="Zmień cechę"><Magnifier /></ToolButton>
          <ToolButton label="Usuń cechę"><Trash /></ToolButton>
          <ToolButton label="Wybierz cechę" state="off"><GrayCheck /></ToolButton>
          <ToolButton label="Zamknij listę cech"><RedX /></ToolButton>
        </div>
      </div>
      <div role="tooltip" className="absolute top-[177px] left-[296px] border border-[#767676] bg-white px-[5px] font-['Noto_Sans',sans-serif] text-[11px] leading-[18px] whitespace-nowrap text-[#575757] shadow-[3px_3px_2px_rgba(0,0,0,0.45)]">
        Klasy cech
      </div>
    </section>
  );
}

/* ---------- context menu ---------- */

type MenuEntry = { text: string; icon?: ReactNode; off?: boolean; sub?: boolean };

const menuGroups: MenuEntry[][] = [
  [
    { text: "Zmień dostawę", icon: <FolderPlus className="h-[17px] w-[17px]" /> },
    { text: "Dodaj dostawę", icon: <WindowPlus /> },
  ],
  [
    { text: "Rozbij dostawy", icon: <Bars /> },
    { text: "Edytuj cechę", icon: <CubesMagnifier /> },
    { text: "Wybierz cechę z listy", icon: <Cubes /> },
    { text: "Atrybuty", icon: <Cubes gray />, off: true },
  ],
  [
    { text: "Dodaj subelement", icon: <Plus gray className="h-[14px] w-[14px]" />, off: true },
    { text: "Zmień", icon: <Magnifier className="h-4 w-4" /> },
    { text: "Usuń", icon: <Trash className="h-[15px] w-[15px]" /> },
  ],
  [
    { text: "Rozwiń wszystko", icon: <TreeToggleIcon sign="plus" /> },
    { text: "Zwiń wszystko", icon: <TreeToggleIcon sign="minus" /> },
  ],
  [
    { text: "Dodaj kolumny", off: true },
    { text: "Formaty listy", off: true, sub: true },
  ],
];

function ContextMenu() {
  return (
    <div role="menu" className="absolute top-[208px] left-[365px] w-[201px] border border-[#a0a0a0] bg-[#f0f0f0] bg-linear-to-r from-transparent from-[29px] via-[#d0d0d0] via-[29px] to-transparent to-[31px] py-[3px] shadow-[3px_4px_2px_rgba(0,0,0,0.5)]">
      {menuGroups.map((group, i) => (
        <div key={i} role="group" className={i > 0 ? "relative pt-[7px] before:absolute before:top-[2px] before:right-[2px] before:left-[30px] before:h-px before:bg-[#d0d0d0]" : ""}>
          {group.map((entry) => (
            <button key={entry.text} type="button" role="menuitem" disabled={entry.off} className={`flex h-[22px] w-full items-center text-left ${entry.off ? "text-[#7b7b7b]" : "text-black"}`}>
              <span className="grid w-[27px] shrink-0 place-items-center">{entry.icon}</span>
              <span className="flex-1 pl-[6px]">{entry.text}</span>
              {entry.sub && <svg viewBox="0 0 4 8" className="mr-[10px] h-2 w-1" aria-hidden="true"><path d="M0 0v8l4-4z" fill="#000" /></svg>}
            </button>
          ))}
        </div>
      ))}
      <svg viewBox="0 0 160 52" className="pointer-events-none absolute top-[74px] left-0 h-[52px] w-[160px]" aria-hidden="true">
        <path d="M28 3.500Q40 2 80 2h52q22 3 23 11v22q-1 9-15 10-14 2.500-25 3H30Q10 47 5 42q-3-2-3.500-8V18Q3 6 28 3.500z" fill="none" stroke="#ed1c24" strokeWidth="3" />
      </svg>
    </div>
  );
}

export default function App() {
  const [menuOpen] = useState(true);
  return (
    <main className="relative h-screen w-full overflow-hidden bg-white font-['DejaVu_Sans_Condensed','DejaVu_Sans',sans-serif] text-[11px] leading-[14px] text-black">
      <div className="flex h-full items-end">
        <div className="grid h-2 w-[667px] grid-cols-[12px_9px_2px_109px_61px_46px_91px_1fr_82px] [&>span]:border-r [&>span]:border-[#ddd]">
          <span className="bg-[#f0f0f0]" /><span /><span /><span /><span /><span /><span /><span /><span />
        </div>
      </div>
      <InvoiceWindow />
      <ElementWindow />
      <ValueWindow />
      <FeaturesWindow />
      {menuOpen && <ContextMenu />}
    </main>
  );
}
